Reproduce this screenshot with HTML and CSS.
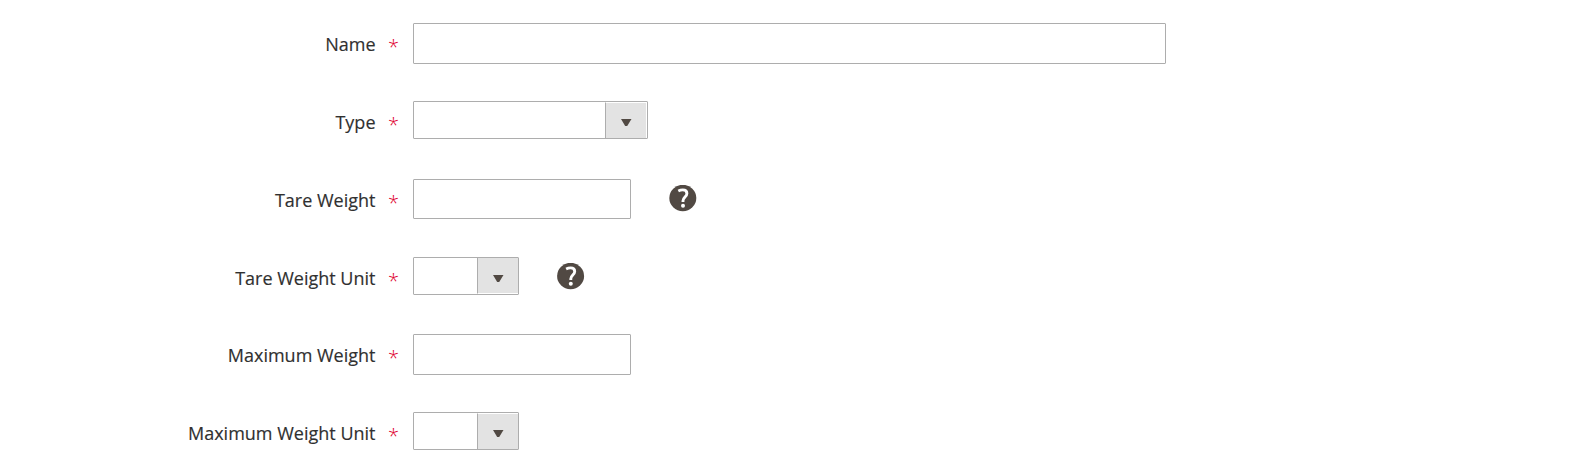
FILE: index.html
```html
<!DOCTYPE html>
<html lang="en">
<head>
<meta charset="utf-8">
<title>Package</title>
<link rel="stylesheet" href="styles.css">
</head>
<body>
<form class="form">
  <div class="field">
    <label class="label" for="name">Name</label><span class="required">*</span>
    <input class="input input-wide" id="name" type="text">
  </div>
  <div class="field">
    <label class="label" for="type">Type</label><span class="required">*</span>
    <div class="select select-wide inset-top" id="type"><span class="toggle"><svg width="11" height="7" viewBox="0 0 11 7"><path d="M0 0h10.500L6.200 7h-2z" fill="#514943"/></svg></span></div>
  </div>
  <div class="field">
    <label class="label" for="tare">Tare Weight</label><span class="required">*</span>
    <input class="input input-short" id="tare" type="text">
    <svg class="help" width="28" height="27" viewBox="0 0 28 27"><ellipse cx="13.800" cy="13" rx="13.500" ry="13.200" fill="#514943"/><path d="M9.300 6Q11.500 4.900 13.800 4.900C16.600 4.900 17.900 6.400 17.900 8.400C17.900 11.700 14 12.200 14 15.700V17" fill="none" stroke="#fff" stroke-width="2.900"/><circle cx="14" cy="20.700" r="2" fill="#fff"/></svg>
  </div>
  <div class="field field-unit">
    <label class="label" for="tare-unit">Tare Weight Unit</label><span class="required">*</span>
    <div class="select select-small inset-bottom" id="tare-unit"><span class="toggle"><svg width="11" height="7" viewBox="0 0 11 7"><path d="M0 0h10.500L6.200 7h-2z" fill="#514943"/></svg></span></div>
    <svg class="help" width="28" height="27" viewBox="0 0 28 27"><ellipse cx="13.600" cy="13" rx="13.500" ry="13.200" fill="#514943"/><path d="M9.100 6Q11.300 4.900 13.600 4.900C16.400 4.900 17.700 6.400 17.700 8.400C17.700 11.700 13.800 12.200 13.800 15.700V17" fill="none" stroke="#fff" stroke-width="2.900"/><circle cx="13.800" cy="20.700" r="2" fill="#fff"/></svg>
  </div>
  <div class="field">
    <label class="label" for="max">Maximum Weight</label><span class="required">*</span>
    <input class="input input-short input-tall" id="max" type="text">
  </div>
  <div class="field">
    <label class="label" for="max-unit">Maximum Weight Unit</label><span class="required">*</span>
    <div class="select select-small inset-top" id="max-unit"><span class="toggle"><svg width="11" height="7" viewBox="0 0 11 7"><path d="M0 0h10.500L6.200 7h-2z" fill="#514943"/></svg></span></div>
  </div>
</form>
</body>
</html>
```
FILE: styles.css
```css
* {
  box-sizing: border-box;
}

body {
  margin: 0;
  height: 468px;
  overflow: hidden;
  background: #fff;
  color: #303030;
  font-family: "Open Sans", "Noto Sans", sans-serif;
  font-size: 18px;
}

.form {
  padding-top: 23px;
}

.field {
  display: flex;
  align-items: flex-start;
  height: 78px;
}

.field-unit {
  height: 77px;
}

.label {
  width: 376px;
  padding: 9px 0.5px 0 0;
  line-height: 25px;
  text-align: right;
  white-space: nowrap;
  -webkit-text-stroke: 0.15px #303030;
}

.required {
  width: 37px;
  padding: 11px 0 0 12px;
  line-height: 25px;
  font-size: 20px;
  font-weight: 300;
  color: #e00030;
}

.input {
  margin: 0;
  padding: 0 10px;
  border: 1px solid #adadad;
  border-radius: 1px;
  background: #fff;
  font: inherit;
}

.input-wide {
  width: 753px;
  height: 41px;
}

.input-short {
  width: 218px;
  height: 40px;
}

.input-tall {
  height: 41px;
}

.select {
  display: flex;
  justify-content: flex-end;
  height: 38px;
  border: 1px solid #adadad;
  border-radius: 1px;
}

.select-wide {
  width: 235px;
  padding-right: 1px;
}

.select-small {
  width: 106px;
}

.toggle {
  display: flex;
  width: 41px;
  border-left: 1px solid #adadad;
  background: #e3e3e3;
  padding: 17px 0 0 15px;
}

.inset-top .toggle {
  border-top: 1px solid #fff;
  padding-top: 16px;
}

.inset-bottom .toggle {
  border-bottom: 1px solid #fff;
}

.help {
  margin: 6px 0 0 38px;
}
```
